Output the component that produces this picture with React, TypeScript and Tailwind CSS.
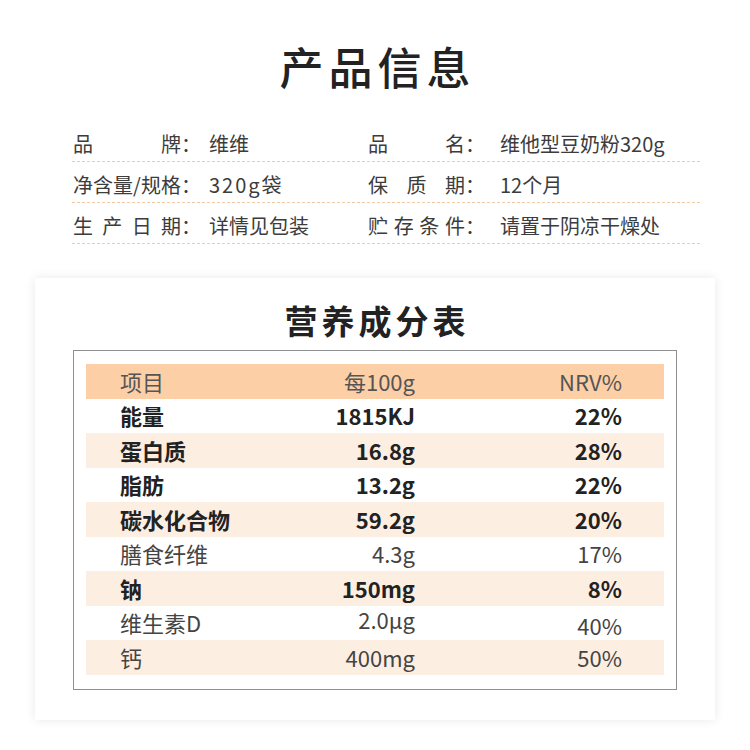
const FONT = { fontFamily: '"Noto Sans CJK SC", "Noto Sans", sans-serif' };

type InfoItem = { label: string; value: string; valueClass?: string };

const infoRows: [InfoItem, InfoItem][] = [
  [
    { label: "品牌", value: "维维" },
    { label: "品名", value: "维他型豆奶粉320g" },
  ],
  [
    { label: "净含量/规格", value: "320g袋", valueClass: "tracking-[2px]" },
    { label: "保质期", value: "12个月" },
  ],
  [
    { label: "生产日期", value: "详情见包装" },
    { label: "贮存条件", value: "请置于阴凉干燥处" },
  ],
];

type Nutrient = { name: string; amount: string; nrv: string; bold?: boolean };

const nutrients: Nutrient[] = [
  { name: "能量", amount: "1815KJ", nrv: "22%", bold: true },
  { name: "蛋白质", amount: "16.8g", nrv: "28%", bold: true },
  { name: "脂肪", amount: "13.2g", nrv: "22%", bold: true },
  { name: "碳水化合物", amount: "59.2g", nrv: "20%", bold: true },
  { name: "膳食纤维", amount: "4.3g", nrv: "17%" },
  { name: "钠", amount: "150mg", nrv: "8%", bold: true },
  { name: "维生素D", amount: "2.0μg", nrv: "40%" },
  { name: "钙", amount: "400mg", nrv: "50%" },
];

function InfoCell({ item, labelWidth, colonGap }: { item: InfoItem; labelWidth: string; colonGap: string }) {
  return (
    <div className="flex items-end whitespace-nowrap">
      <span className={`${labelWidth} shrink-0 text-justify [text-align-last:justify]`}>{item.label}</span>
      <span className={`w-[20px] shrink-0 ${colonGap}`}>：</span>
      <span className={item.valueClass}>{item.value}</span>
    </div>
  );
}

export default function App() {
  return (
    <div className="min-h-[750px] w-[750px] bg-white" style={FONT}>
      <h1 className="pt-[38px] pl-[5px] text-center text-[44px] font-medium leading-[56px] tracking-[5px] text-[#222]">
        产品信息
      </h1>

      <div className="mt-[27px] ml-[72px] w-[628px] text-[20px] text-[#3c3c3c]">
        {infoRows.map(([left, right]) => (
          <div
            key={left.label}
            className="grid h-[41px] grid-cols-[296px_1fr] items-end border-b border-dashed border-[#f4c9a6] pb-[4px] leading-[26px]"
          >
            <div className="pl-px">
              <InfoCell item={left} labelWidth="w-[108px]" colonGap="mr-[8px]" />
            </div>
            <InfoCell item={right} labelWidth="w-[97px]" colonGap="mr-[15px]" />
          </div>
        ))}
      </div>

      <div className="mt-[34px] ml-[35px] w-[680px] bg-white pb-[30px] pt-[20px] shadow-[0_0_10px_rgba(0,0,0,0.09)]">
        <h2 className="pl-[4px] text-center text-[33px] font-bold leading-[44px] tracking-[4px] text-[#222]">
          营养成分表
        </h2>

        <div className="mx-[38px] mt-[8px] border border-[#8f8f8f] px-[12px] pb-[14px] pt-[13px] text-[22px]">
          <div className="flex h-[34.5px] items-center bg-[#fdcfa7] text-[#555]">
            <span className="w-[200px] pl-[34px]">项目</span>
            <span className="w-[129px] text-right">每100g</span>
            <span className="w-[207px] text-right">NRV%</span>
          </div>
          {nutrients.map((n, i) => (
            <div
              key={n.name}
              className={`flex h-[34.5px] items-center ${i % 2 === 1 ? "bg-[#fdeee2]" : "bg-white"} ${
                n.bold ? "font-bold text-[#222]" : "text-[#444]"
              }`}
            >
              <span className="w-[200px] pl-[34px]">{n.name}</span>
              <span className={`w-[129px] text-right ${n.name === "维生素D" ? "-translate-y-[3px]" : ""}`}>
                {n.amount}
              </span>
              <span className={`w-[207px] text-right ${n.name === "维生素D" ? "translate-y-[3px]" : ""}`}>
                {n.nrv}
              </span>
            </div>
          ))}
        </div>
      </div>
    </div>
  );
}
